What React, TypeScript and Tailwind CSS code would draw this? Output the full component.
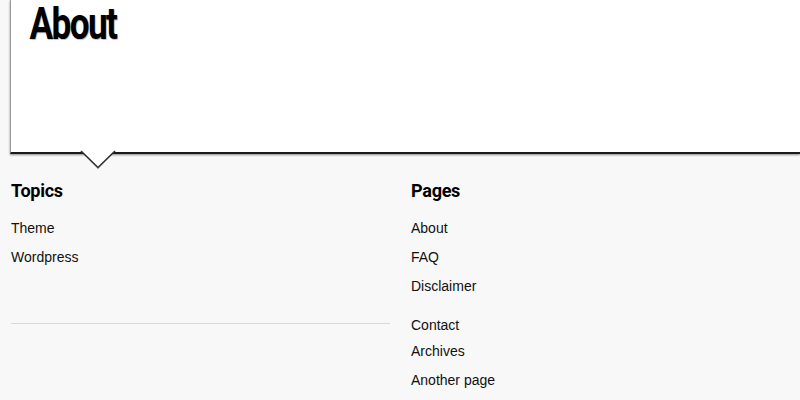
import React from "react";

export default function App() {
  const link = "text-[14px] text-[#111] leading-none";
  return (
    <div className="w-[800px] h-[400px] overflow-hidden bg-[#f8f8f8]" style={{ fontFamily: '"Liberation Sans", Arial, sans-serif' }}>
      <div className="relative ml-[10px] h-[154px] bg-white border-l border-[#9a9a9a] border-b-2 border-b-[#1a1a1a] shadow-[0_1px_2px_rgba(0,0,0,0.45)]">
        <h1
          className="inline-block pl-[23px] pr-[8px] pt-[2px] text-[44px] font-bold text-black leading-[44px] tracking-[-2px] origin-left scale-x-[0.8] [text-shadow:1px_1px_1px_rgba(0,0,0,0.25)]"
          style={{ fontFamily: "Roboto, sans-serif" }}
        >
          About
        </h1>
        <svg className="absolute left-[69px] top-[150px]" width="36" height="20" viewBox="0 0 36 20">
          <polygon points="0,0 36,0 18,17.5" fill="white" />
          <polyline points="1,1 18,17.5 35,1" fill="none" stroke="#333" strokeWidth="1.6" />
          <polyline points="3,3 18,19 33,3" fill="none" stroke="rgba(0,0,0,0.2)" strokeWidth="1" />
        </svg>
      </div>
      <div className="flex pl-[11px] pt-[27px] gap-[21px]">
        <div className="w-[379px]">
          <h2 className="text-[19px] font-bold text-black leading-none tracking-[-0.3px] origin-left scale-x-[0.95] h-[20px]" style={{ fontFamily: "Roboto, sans-serif" }}>Topics</h2>
          <div className="mt-[20px] flex flex-col gap-[15px]">
            <span className={link}>Theme</span>
            <span className={link}>Wordpress</span>
          </div>
          <div className="mt-[59px] border-t border-[#d8d8d8]" />
        </div>
        <div className="w-[380px]">
          <h2 className="text-[19px] font-bold text-black leading-none tracking-[-0.3px] origin-left scale-x-[0.95] h-[20px]" style={{ fontFamily: "Roboto, sans-serif" }}>Pages</h2>
          <div className="mt-[20px] flex flex-col">
            <span className={link}>About</span>
            <span className={`${link} mt-[15px]`}>FAQ</span>
            <span className={`${link} mt-[15px]`}>Disclaimer</span>
            <span className={`${link} mt-[25px]`}>Contact</span>
            <span className={`${link} mt-[12px]`}>Archives</span>
            <span className={`${link} mt-[15px]`}>Another page</span>
          </div>
        </div>
      </div>
    </div>
  );
}
